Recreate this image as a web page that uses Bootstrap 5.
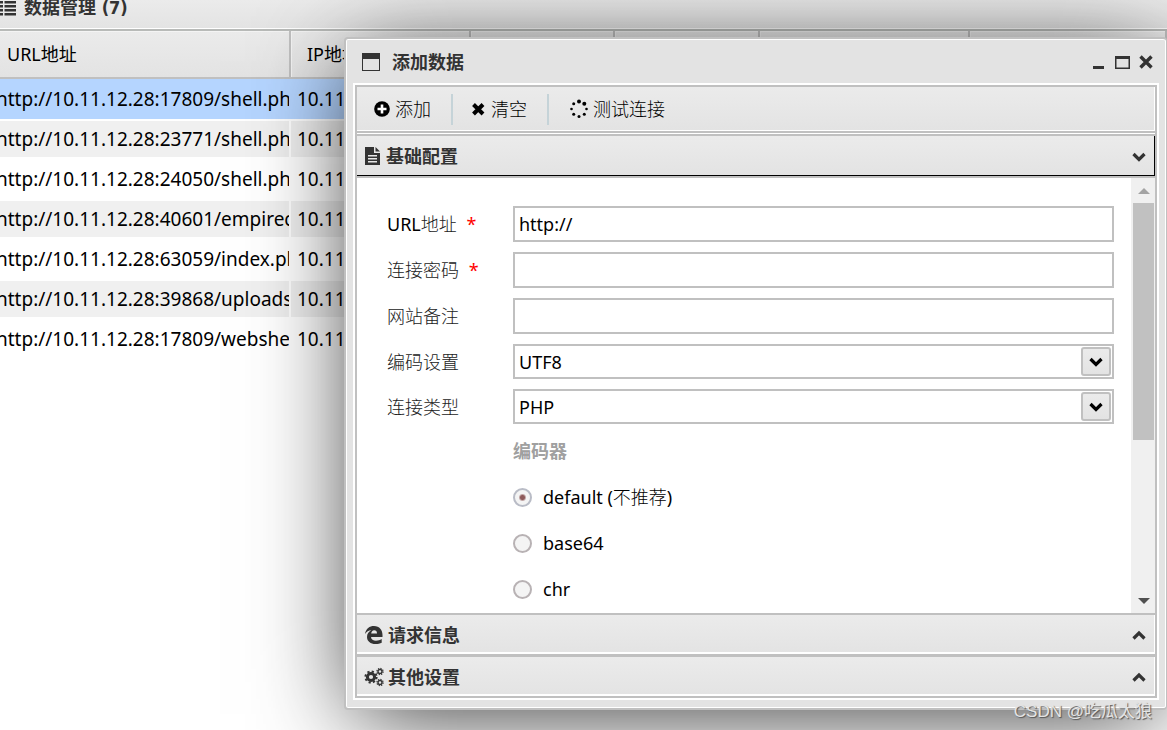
<!DOCTYPE html>
<html lang="zh-CN">
<head>
<meta charset="utf-8">
<meta name="viewport" content="width=device-width, initial-scale=1">
<title>数据管理</title>
<link href="https://cdn.jsdelivr.net/npm/bootstrap@5.3.0/dist/css/bootstrap.min.css" rel="stylesheet">
<style>
:root { --line: #c0c0c0; --ink: #333; --face: linear-gradient(#ebebeb, #e3e3e3); }
body { font-family: "Noto Sans", "Noto Sans CJK SC", sans-serif; font-size: 18px; line-height: 24px; color: #000; background: #fff; }
svg { display: block; flex: none; }

/* data grid behind the window; scrolled slightly to the left */
.grid-pane { margin-left: -6px; }
.pane-title { height: 31px; padding: 0 6px 14px; background: var(--face); border-bottom: 2px solid #b8bab8; box-shadow: inset 0 -1px #fff; color: var(--ink); font-weight: 600; font-family: "DejaVu Sans Condensed", "Noto Sans CJK SC", sans-serif; }
.shells { table-layout: fixed; width: 100%; border-collapse: separate; border-spacing: 0; font-size: 19px; }
.shells th { height: 48px; padding: 0 0 0 16px; font-size: 18px; font-weight: 400; white-space: nowrap; background: var(--face); border-bottom: 2px solid var(--line); border-right: 2px solid var(--line); box-shadow: inset 1px 1px #f4f4f4; }
.shells th:first-child { padding-left: 13px; }
.shells td { height: 40px; padding: 0 0 0 6px; white-space: nowrap; overflow: hidden; border: solid #fff; border-width: 2px 2px 2px 0; }
.shells td:first-child { padding-left: 2px; }
.shells tr:nth-child(even) td { background: #f0f0f0; }
.shells tr.picked td { background: #b5d5ff; border-color: #b5d5ff; }

/* window */
.win { left: 344px; right: 0; top: 37px; bottom: 20px; padding: 0 9px 10px; background: #e3e3e3; border: 2px solid var(--line); border-right-width: 1px; border-radius: 4px; box-shadow: inset 0 0 0 1px #fff, 0 14px 90px -10px rgba(0, 0, 0, .8); }
.win-head { height: 46px; flex: none; padding: 0 3px 0 7px; color: var(--ink); font-weight: 600; }
.win-head button, .fold { border: 0; background: none; color: inherit; padding: 0; }
.win-body { border: 2px solid var(--line); outline: 2px solid #fff; min-height: 0; background: #fff; }
.tools { height: 46px; flex: none; padding: 0 16px; background: var(--face); border-bottom: 2px solid var(--line); box-shadow: inset -1px -1px #fff; }
.tools button { border: 0; background: none; padding: 0; color: #000; font-weight: 300; }
.tool-sep { width: 2px; height: 31px; background: #c5d3d8; }
.fold { flex: none; padding: 0 8px 0 7px; color: var(--ink); font-weight: 600; background: var(--face); box-shadow: inset -1px -2px #fff; }
.fold.opened { height: 44px; margin-top: 1px; border-top: 2px solid var(--line); border-bottom: 2px solid var(--line); box-shadow: inset -1px -1px #000; }
.fold.middle { height: 44px; border-top: 2px solid var(--line); border-bottom: 3px solid var(--line); }
.fold.last { height: 39px; }

.form-area { padding: 28px 17px 0 30px; }
.form-line { margin-bottom: 10px; }
.form-line > label { width: 126px; flex: none; color: #222; font-weight: 300; }
.form-line > label b { font-weight: 400; color: #000; }
.form-line > label i { font-style: normal; font-weight: 400; color: #f00; padding-left: 5px; }
.box { height: 36px; padding: 0 4px; border: 2px solid var(--line); border-radius: 0; font-size: 18px; color: #000; background: #fff; appearance: none; width: 100%; }
select.box { display: block; height: 35px; }
.drop { position: relative; }
.drop-mark { position: absolute; right: 3px; top: 3px; width: 30px; height: 29px; border: 2px solid var(--line); border-radius: 3px; background: var(--face); pointer-events: none; }
.encoders { margin-left: 126px; }
.encoders legend { font-size: 18px; line-height: 35px; height: 35px; color: #a0a0a0; font-weight: 600; margin-bottom: 10px; }
.encoder { height: 36px; margin-bottom: 10px; font-weight: 300; }
.encoder b { font-weight: 400; }
.encoder input { appearance: none; width: 19px; height: 19px; margin: 0 11px 0 0; border: 2px solid #b8b2b4; border-radius: 50%; background: #f4f4f4; }
.encoder input:checked { border-color: #b9bcc6; background: radial-gradient(circle, #8e5a5a 0 2px, #f4f4f4 4px); }

.rail { width: 24px; flex: none; padding: 9px 1px 8px 2px; background: #f0f0f0; }
.rail-thumb { width: 21px; height: 237px; margin-top: 8px; background: #c1c1c1; }
.credit { right: 15px; bottom: 6px; font: 17px/24px "Liberation Sans", "Noto Sans CJK SC", sans-serif; color: #e4e4e4; text-shadow: 1px 1px 1px #555; }
</style>
</head>
<body class="position-relative vh-100 overflow-hidden">

<main class="grid-pane">
  <header class="pane-title d-flex align-items-center">
    <svg class="me-2" width="16" height="16" viewBox="0 0 16 16" fill="#333"><path d="M0 1h3v2.500H0zM0 5h3v2.500H0zM0 9h3v2.500H0zM0 13h3v2.500H0zM4.500 1H16v2.500H4.500zM4.500 5H16v2.500H4.500zM4.500 9H16v2.500H4.500zM4.500 13H16v2.500H4.500z"/></svg>
    <span>数据管理 (7)</span>
  </header>
  <table class="shells">
    <colgroup><col style="width:297px"><col style="width:180px"><col style="width:144px"><col style="width:145px"><col style="width:210px"><col></colgroup>
    <thead><tr><th>URL地址</th><th>IP地址</th><th></th><th></th><th></th><th></th></tr></thead>
    <tbody>
      <tr class="picked"><td>http://10.11.12.28:17809/shell.php</td><td>10.11.12.28</td><td></td><td></td><td></td><td></td></tr>
      <tr><td>http://10.11.12.28:23771/shell.php</td><td>10.11.12.28</td><td></td><td></td><td></td><td></td></tr>
      <tr><td>http://10.11.12.28:24050/shell.php</td><td>10.11.12.28</td><td></td><td></td><td></td><td></td></tr>
      <tr><td>http://10.11.12.28:40601/empirecms</td><td>10.11.12.28</td><td></td><td></td><td></td><td></td></tr>
      <tr><td>http://10.11.12.28:63059/index.php</td><td>10.11.12.28</td><td></td><td></td><td></td><td></td></tr>
      <tr><td>http://10.11.12.28:39868/uploads</td><td>10.11.12.28</td><td></td><td></td><td></td><td></td></tr>
      <tr><td>http://10.11.12.28:17809/webshell</td><td>10.11.12.28</td><td></td><td></td><td></td><td></td></tr>
    </tbody>
  </table>
</main>

<section class="win position-absolute d-flex flex-column" role="dialog" aria-labelledby="winTitle">
  <header class="win-head d-flex align-items-center">
    <svg width="18" height="18" viewBox="0 0 18 18"><path fill="#333" fill-rule="evenodd" d="M0 0h18v18H0zM1 6v11h16V6z"/></svg>
    <span id="winTitle" class="ms-2 ps-1">添加数据</span>
    <div class="ms-auto d-flex gap-2">
      <button type="button" aria-label="最小化"><svg width="16" height="16" viewBox="0 0 16 16"><path fill="#333" d="M3 12h11v3H3z"/></svg></button>
      <button type="button" aria-label="最大化"><svg width="16" height="16" viewBox="0 0 16 16"><path fill="#333" fill-rule="evenodd" d="M1 2h15v13H1zM2.500 5v8.500h12V5z"/></svg></button>
      <button type="button" aria-label="关闭"><svg width="16" height="16" viewBox="0 0 16 16"><path stroke="#333" stroke-width="3.400" d="M2.500 2.500l11 11M13.500 2.500l-11 11"/></svg></button>
    </div>
  </header>

  <div class="win-body flex-fill d-flex flex-column">
    <div class="tools d-flex align-items-center gap-3">
      <button type="button" class="d-flex align-items-center gap-1 pe-1"><svg width="18" height="18" viewBox="0 0 18 18"><circle cx="9" cy="9" r="7.800"/><path fill="#fff" d="M7.700 4.500h2.600v3.200h3.200v2.600h-3.200v3.200H7.700v-3.200H4.500V7.700h3.200z"/></svg>添加</button>
      <span class="tool-sep"></span>
      <button type="button" class="d-flex align-items-center gap-1 pe-1"><svg width="18" height="18" viewBox="0 0 18 18"><path stroke="#000" stroke-width="4" d="M4.500 4.500l9.500 9.500M14 4.500L4.500 14"/></svg>清空</button>
      <span class="tool-sep"></span>
      <button type="button" class="d-flex align-items-center gap-1 ps-1"><svg width="20" height="20" viewBox="0 0 20 20"><circle cx="10" cy="2.500" r="2"/><circle cx="15.300" cy="4.700" r="2"/><circle cx="17.500" cy="10" r="1.300"/><circle cx="15.300" cy="15.300" r="1.500"/><circle cx="10" cy="17.500" r="1.500"/><circle cx="4.700" cy="15.300" r="1.500"/><circle cx="2.500" cy="10" r="1.300"/><circle cx="4.700" cy="4.700" r="1.500"/></svg>测试连接</button>
    </div>

    <button type="button" class="fold opened d-flex align-items-center gap-1" aria-expanded="true">
      <svg width="18" height="18" viewBox="0 0 18 18" fill="#333"><path fill-rule="evenodd" d="M1 0h9v6h6v12H1zM4 8v1.500h9V8zM4 11v1.500h9V11zM4 14v1.500h9V14z"/><path d="M11.500 0L16 4.500h-4.500z"/></svg>
      <span>基础配置</span>
      <svg class="ms-auto" width="16" height="16" viewBox="0 0 16 16"><path fill="none" stroke="#333" stroke-width="3.200" d="M2.500 6L8 11.500 13.500 6"/></svg>
    </button>

    <div class="flex-fill d-flex overflow-hidden">
      <form class="form-area flex-fill overflow-hidden">
        <div class="form-line d-flex align-items-center"><label for="url"><b>URL</b>地址 <i>*</i></label><input id="url" class="box" type="text" value="http://"></div>
        <div class="form-line d-flex align-items-center"><label for="pwd">连接密码 <i>*</i></label><input id="pwd" class="box" type="text"></div>
        <div class="form-line d-flex align-items-center"><label for="note">网站备注</label><input id="note" class="box" type="text"></div>
        <div class="form-line d-flex align-items-center"><label for="enc">编码设置</label>
          <div class="drop flex-fill"><select id="enc" class="box"><option>UTF8</option></select><span class="drop-mark d-flex align-items-center justify-content-center"><svg width="16" height="16" viewBox="0 0 16 16"><path fill="none" stroke="#000" stroke-width="3.200" d="M2.500 5L8 10.500 13.500 5"/></svg></span></div></div>
        <div class="form-line d-flex align-items-center"><label for="kind">连接类型</label>
          <div class="drop flex-fill"><select id="kind" class="box"><option>PHP</option></select><span class="drop-mark d-flex align-items-center justify-content-center"><svg width="16" height="16" viewBox="0 0 16 16"><path fill="none" stroke="#000" stroke-width="3.200" d="M2.500 5L8 10.500 13.500 5"/></svg></span></div></div>
        <fieldset class="encoders">
          <legend>编码器</legend>
          <div class="encoder d-flex align-items-center"><input type="radio" name="encoder" id="e1" checked><label for="e1"><b>default (</b>不推荐<b>)</b></label></div>
          <div class="encoder d-flex align-items-center"><input type="radio" name="encoder" id="e2"><label for="e2"><b>base64</b></label></div>
          <div class="encoder d-flex align-items-center"><input type="radio" name="encoder" id="e3"><label for="e3"><b>chr</b></label></div>
        </fieldset>
      </form>
      <div class="rail d-flex flex-column align-items-center" aria-hidden="true">
        <svg width="12" height="8" viewBox="0 0 12 8"><path fill="#a3a3a3" d="M6 1l6 6H0z"/></svg>
        <div class="rail-thumb"></div>
        <svg class="mt-auto" width="12" height="8" viewBox="0 0 12 8"><path fill="#505050" d="M0 1h12L6 7z"/></svg>
      </div>
    </div>

    <button type="button" class="fold middle d-flex align-items-center gap-1" aria-expanded="false">
      <svg width="20" height="20" viewBox="0 0 20 20"><path fill="#333" d="M1 9C2 3.500 5.500 1 10 1c5.500 0 8.500 4 8.500 9v2H7c.2 2.500 2.200 3.700 5 3.700 2.200 0 4-.6 5.700-1.600v3.600C16 18.600 14 19 11.500 19 6.500 19 3 16.300 3 12c0-3 1.600-5.300 4.300-6.700C4.700 5.500 2.500 6.700 1 9zm6.200-.6H13C13 6.300 12 5.200 10.200 5.200S7.400 6.500 7.200 8.400z"/></svg>
      <span>请求信息</span>
      <svg class="ms-auto" width="16" height="16" viewBox="0 0 16 16"><path fill="none" stroke="#333" stroke-width="3.200" d="M2.500 11.500L8 6l5.500 5.500"/></svg>
    </button>
    <button type="button" class="fold last d-flex align-items-center gap-1" aria-expanded="false">
      <svg width="20" height="20" viewBox="0 0 20 20" fill="none" stroke="#333"><circle cx="7" cy="10" r="3.600" stroke-width="3"/><circle cx="7" cy="10" r="5.600" stroke-width="2" stroke-dasharray="2.200 2.200"/><circle cx="16" cy="4.500" r="2" stroke-width="1.400"/><circle cx="16" cy="4.500" r="3.100" stroke-width="1.200" stroke-dasharray="1.220 1.220"/><circle cx="16" cy="15.500" r="2" stroke-width="1.400"/><circle cx="16" cy="15.500" r="3.100" stroke-width="1.200" stroke-dasharray="1.220 1.220"/></svg>
      <span>其他设置</span>
      <svg class="ms-auto" width="16" height="16" viewBox="0 0 16 16"><path fill="none" stroke="#333" stroke-width="3.200" d="M2.500 11.500L8 6l5.500 5.500"/></svg>
    </button>
  </div>
</section>

<div class="credit position-absolute">CSDN @吃瓜太狼</div>

<script src="https://cdn.jsdelivr.net/npm/bootstrap@5.3.0/dist/js/bootstrap.bundle.min.js"></script>
</body>
</html>
